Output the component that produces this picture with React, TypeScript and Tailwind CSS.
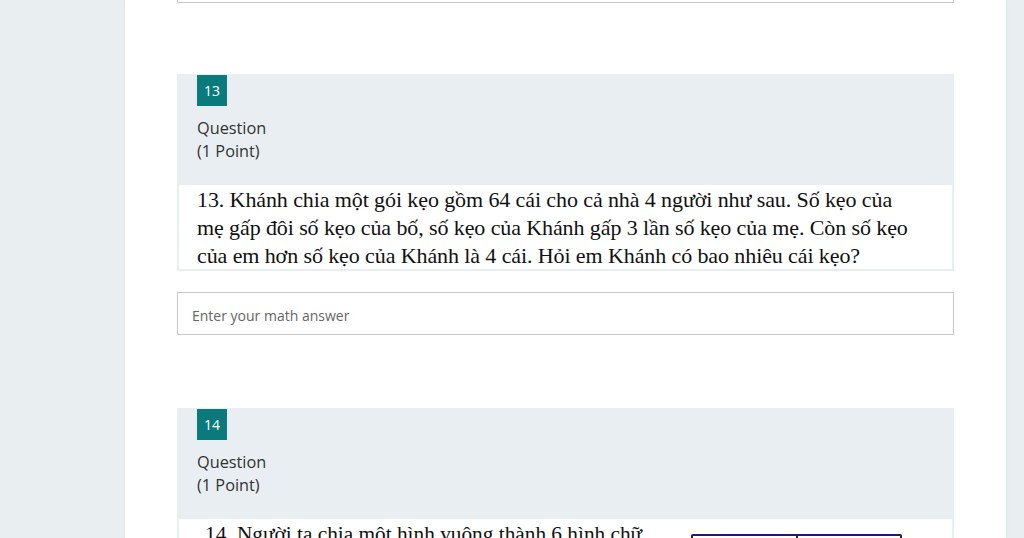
import React from "react";

const sans = { fontFamily: "'Open Sans', 'Noto Sans', sans-serif" };
const serif = { fontFamily: "'Liberation Serif', 'Times New Roman', serif" };

function Badge({ n }: { n: number }) {
  return (
    <div className="w-[30px] h-[31px] bg-[#0b7a7d] text-white text-[14px] flex items-center justify-center">
      {n}
    </div>
  );
}

function QuestionHead({ n }: { n: number }) {
  return (
    <div className="pl-5 pt-px">
      <Badge n={n} />
      <div className="mt-[11px] text-[16.3px] leading-[23px] text-[#333]">
        <div>Question</div>
        <div>(1 Point)</div>
      </div>
    </div>
  );
}

export default function App() {
  const q13 = [
    "13. Khánh chia một gói kẹo gồm 64 cái cho cả nhà 4 người như sau. Số kẹo của",
    "mẹ gấp đôi số kẹo của bố, số kẹo của Khánh gấp 3 lần số kẹo của mẹ. Còn số kẹo",
    "của em hơn số kẹo của Khánh là 4 cái. Hỏi em Khánh có bao nhiêu cái kẹo?",
  ];

  return (
    <div className="h-[538px] w-[1024px] overflow-hidden flex bg-[#e9eef1]" style={sans}>
      <div className="w-[125px] shrink-0" />
      <main className="w-[881px] shrink-0 bg-white shadow-[0_0_3px_rgba(0,0,0,0.08)] pl-[52px] pr-[52px]">
        {/* tail of previous answer box */}
        <div className="h-[3px] border border-t-0 border-[#c8c8c8]" />

        {/* Question 13 */}
        <section className="mt-[71px] bg-[#e8eef1] pb-[2px]">
          <QuestionHead n={13} />
          <div
            className="mt-[22px] mx-[2px] bg-white h-[84px] pl-[18px] pt-[1px] text-[22px] tracking-[-0.1px] leading-[28px] text-[#111] whitespace-nowrap"
            style={serif}
          >
            {q13.map((l) => (
              <div key={l}>{l}</div>
            ))}
          </div>
        </section>

        <input
          className="mt-[21px] w-full h-[43px] border border-[#c8c8c8] px-[14px] pt-[3px] text-[14px] text-[#333] placeholder:text-[#666] outline-none"
          placeholder="Enter your math answer"
        />

        {/* Question 14 */}
        <section className="mt-[73px] bg-[#e8eef1]">
          <QuestionHead n={14} />
          <div className="mt-[22px] mx-[2px] bg-white h-[120px] flex">
            <div
              className="w-[512px] pl-[26px] pt-[1px] text-[21.3px] leading-[28px] text-[#111] whitespace-nowrap"
              style={serif}
            >
              14. Người ta chia một hình vuông thành 6 hình chữ
            </div>
            <div className="mt-[15px] w-[211px] h-[100px] border-2 border-[#1d1b6b] rounded-[2px] flex">
              <div className="w-[105px] border-r-2 border-[#1d1b6b]" />
            </div>
          </div>
        </section>
      </main>
      <div className="flex-1" />
    </div>
  );
}
